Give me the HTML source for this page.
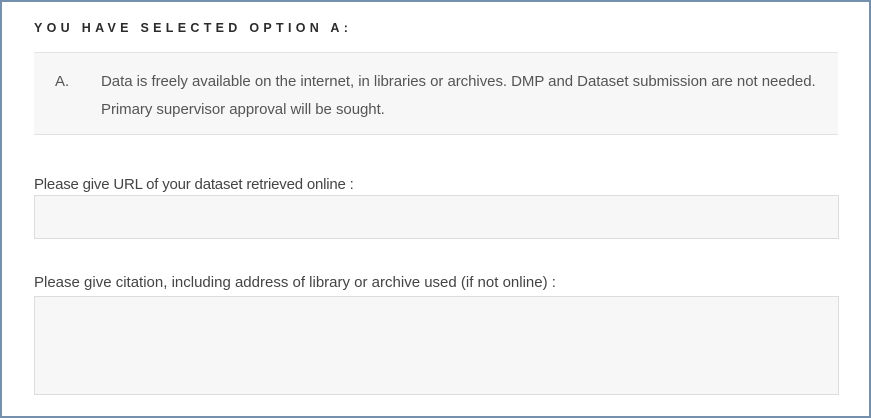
<!DOCTYPE html>
<html><head><style>
body{margin:0;width:871px;height:418px;overflow:hidden;background:#fff;font-family:"Liberation Sans",sans-serif;}
.frame{position:absolute;left:0;top:0;width:867px;height:414px;border:2px solid #7590ad;}
h{position:absolute;left:34px;top:21px;font-size:12.5px;font-weight:bold;letter-spacing:4.3px;color:#2b2b2b;}
.box{position:absolute;left:34px;top:52px;width:804px;height:81px;background:#f7f7f7;border-top:1px solid #e2e2e2;border-bottom:1px solid #e2e2e2;font-size:15px;color:#555;}
.box .a{position:absolute;left:21px;top:20px;}
.box .t{position:absolute;left:67px;top:15px;line-height:28px;letter-spacing:-0.05px;}
.lbl{position:absolute;left:34px;font-size:15px;color:#444;}
.in{position:absolute;left:34px;width:803px;background:#f7f7f7;border:1px solid #ddd;}
</style></head><body>
<div class="frame"></div>
<h>YOU HAVE SELECTED OPTION A:</h>
<div class="box"><span class="a">A.</span><div class="t">Data is freely available on the internet, in libraries or archives. DMP and Dataset submission are not needed.<br>Primary supervisor approval will be sought.</div></div>
<div class="lbl" style="top:176px;letter-spacing:-0.2px">Please give URL of your dataset retrieved online :</div>
<div class="in" style="top:195px;height:42px"></div>
<div class="lbl" style="top:274px">Please give citation, including address of library or archive used (if not online) :</div>
<div class="in" style="top:296px;height:97px"></div>
</body></html>
